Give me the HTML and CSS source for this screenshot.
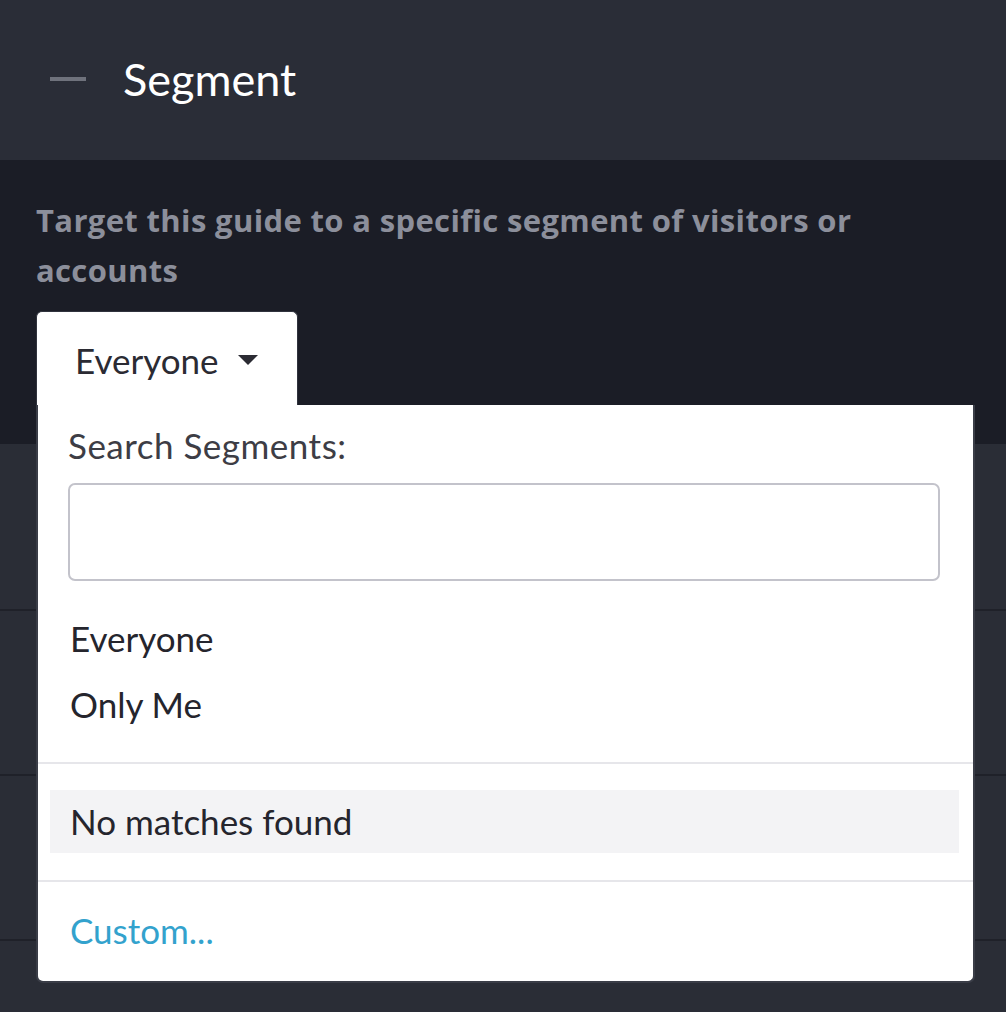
FILE: index.html
```html
<!DOCTYPE html>
<html lang="en">
<head>
<meta charset="utf-8">
<title>Segment</title>
<link rel="stylesheet" href="styles.css">
</head>
<body>
<header class="header">
  <span class="collapse-icon" aria-hidden="true"></span>
  <h1 class="title">Segment</h1>
</header>
<section class="panel">
  <p class="description">Target this guide to a specific segment of visitors or accounts</p>
  <div class="dropdown">
    <button class="dropdown-toggle" type="button">
      <span>Everyone</span>
      <svg class="caret" width="20" height="10" viewBox="0 0 20 10"><path d="M0 0 H20 L10 10 Z" fill="#2b2b33"/></svg>
    </button>
    <div class="dropdown-menu">
      <label class="search-label" for="seg-search">Search Segments:</label>
      <input class="search-input" id="seg-search" type="text">
      <ul class="options">
        <li class="option">Everyone</li>
        <li class="option">Only Me</li>
      </ul>
      <div class="divider"></div>
      <div class="no-match">No matches found</div>
      <div class="divider"></div>
      <a class="custom" href="#">Custom...</a>
    </div>
  </div>
</section>
<div class="rows">
  <div class="row row-first"></div>
  <div class="row"></div>
  <div class="row"></div>
  <div class="row row-last"></div>
</div>
</body>
</html>
```

FILE: styles.css
```css
* { box-sizing: border-box; }
html, body { margin: 0; padding: 0; }
body {
  background: #2a2d36;
  font-family: Lato, "Open Sans", Arial, sans-serif;
  width: 1006px;
  height: 1012px;
  overflow: hidden;
}
.header {
  height: 160px;
  background: #2a2d37;
  display: flex;
  align-items: center;
  padding-left: 50px;
}
.collapse-icon {
  display: block;
  width: 36px;
  height: 4px;
  background: #6f727c;
  margin-top: -2px;
}
.title {
  margin: 0 0 2px 37px;
  font-size: 45px;
  line-height: 44px;
  font-weight: 400;
  color: #ffffff;
}
.panel {
  height: 284px;
  background: #1b1d26;
  padding: 35px 0 0 36px;
}
.description {
  margin: 0;
  width: 870px;
  font-family: "Open Sans", Lato, Arial, sans-serif;
  font-size: 31px;
  letter-spacing: 0.35px;
  line-height: 50px;
  font-weight: 700;
  color: #8c8f9b;
}
.dropdown {
  position: relative;
  margin-top: 16px;
  width: 262px;
}
.dropdown-toggle {
  display: flex;
  align-items: center;
  width: 262px;
  height: 94px;
  padding: 0 0 0 38px;
  margin: 0;
  border: 1px solid #30333d;
  border-bottom: none;
  border-radius: 6px 6px 0 0;
  background: #ffffff;
  font-family: inherit;
  font-size: 35px;
  color: #2b2b33;
  cursor: pointer;
}
.dropdown-toggle span { margin-top: 2px; }
.caret { margin-left: 19px; margin-top: 2px; }
.dropdown-menu {
  position: absolute;
  top: 94px;
  left: 0;
  width: 939px;
  height: 578px;
  background: #ffffff;
  border: 2px solid #3a3d47;
  border-top: none;
  border-radius: 0 0 7px 7px;
  padding-top: 20px;
}
.search-label {
  display: block;
  margin-left: 30px;
  font-size: 35px;
  letter-spacing: 0.5px;
  line-height: 40px;
  color: #3d3d45;
}
.search-input {
  display: block;
  margin: 18px 0 0 30px;
  width: 872px;
  height: 98px;
  border: 2px solid #c3c3cb;
  border-radius: 7px;
  background: #ffffff;
  outline: none;
}
.options {
  list-style: none;
  margin: 24px 0 0;
  padding: 0;
}
.option {
  padding-left: 32px;
  font-size: 35px;
  line-height: 66px;
  color: #25252d;
}
.divider {
  height: 2px;
  background: #e6e6ea;
  margin-top: 25px;
}
.no-match {
  margin: 26px 14px 0 12px;
  height: 63px;
  background: #f3f3f5;
  padding-left: 20px;
  font-size: 35px;
  line-height: 63px;
  color: #25252d;
}
.divider + .no-match + .divider { margin-top: 27px; }
.custom {
  display: block;
  margin: 28px 0 0 32px;
  font-size: 35px;
  line-height: 40px;
  color: #33a2cd;
  text-decoration: none;
}
.rows { display: flex; flex-direction: column; }
.row {
  height: 165px;
  border-bottom: 2px solid #1f2129;
}
.row-first { height: 167px; }
.row-last { border-bottom: none; height: 80px; }
```
